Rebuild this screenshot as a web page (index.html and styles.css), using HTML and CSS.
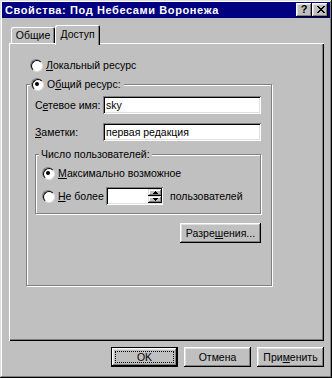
FILE: index.html
```html
<!DOCTYPE html>
<html lang="ru">
<head>
<meta charset="utf-8">
<title>Свойства</title>
<link rel="stylesheet" href="styles.css">
</head>
<body>
<div class="window">
  <div class="titlebar">
    <span class="title">Свойства: Под Небесами Воронежа</span>
    <div class="title-buttons">
      <span class="tbtn">?</span>
      <span class="tbtn close"><svg width="8" height="7" viewBox="0 0 8 7"><path d="M0 0h2v1h1v1h2v-1h1v-1h2v1h-1v1h-1v1h-1v1h1v1h1v1h1v1h-2v-1h-1v-1h-2v1h-1v1h-2v-1h1v-1h1v-1h1v-1h-1v-1h-1v-1h-1z" fill="#000"/></svg></span>
    </div>
  </div>

  <div class="tabs">
    <span class="tab">Общие</span>
    <span class="tab active">Доступ</span>
  </div>

  <div class="panel">
    <div class="radio-row">
      <span class="radio"></span>
      <span class="label"><u>Л</u>окальный ресурс</span>
    </div>

    <div class="group outer">
      <div class="legend radio-row">
        <span class="radio checked"></span>
        <span class="label">О<u>б</u>щий ресурс:</span>
      </div>

      <div class="field">
        <span class="flabel">С<u>е</u>тевое имя:</span>
        <span class="input">sky</span>
      </div>
      <div class="field second">
        <span class="flabel"><u>З</u>аметки:</span>
        <span class="input">первая редакция</span>
      </div>

      <div class="group inner">
        <div class="legend plain">Число пользователей:</div>
        <div class="radio-row">
          <span class="radio checked"></span>
          <span class="label"><u>М</u>аксимально возможное</span>
        </div>
        <div class="radio-row limit">
          <span class="radio"></span>
          <span class="label nlabel"><u>Н</u>е более</span>
          <span class="spin">
            <span class="spin-field"></span>
            <span class="spin-btns">
              <span class="sbtn"><svg width="5" height="3" viewBox="0 0 5 3"><path d="M2 0h1v1h1v1h1v1h-5v-1h1v-1h1z" fill="#000"/></svg></span>
              <span class="sbtn"><svg width="5" height="3" viewBox="0 0 5 3"><path d="M0 0h5v1h-1v1h-1v1h-1v-1h-1v-1h-1z" fill="#000"/></svg></span>
            </span>
          </span>
          <span class="label users">пользователей</span>
        </div>
      </div>

      <div class="perm-row">
        <span class="button perm">Разре<u>ш</u>ения...</span>
      </div>
    </div>
  </div>

  <div class="actions">
    <span class="button default"><span class="focus">OK</span></span>
    <span class="button">Отмена</span>
    <span class="button">При<u>м</u>енить</span>
  </div>
</div>
</body>
</html>
```

FILE: styles.css
```css
* { box-sizing: border-box; }

html, body {
  margin: 0;
  padding: 0;
  background: #c0c0c0;
}

body {
  width: 332px;
  height: 378px;
  overflow: hidden;
  font-family: "Liberation Sans", Arial, sans-serif;
  font-size: 10.5px;
  color: #000;
}

u { text-decoration: underline; text-underline-offset: 1px; }

.window {
  width: 332px;
  height: 378px;
  padding: 2px;
  background: #c0c0c0;
  box-shadow: inset -1px -1px #000, inset 1px 1px #dfdfdf,
              inset -2px -2px #808080, inset 2px 2px #fff;
  display: flex;
  flex-direction: column;
}

.titlebar {
  height: 16px;
  background: #000080;
  display: flex;
  align-items: center;
  justify-content: space-between;
  padding: 0 2px 0 3px;
}

.title {
  color: #fff;
  font-weight: bold;
  font-size: 11px;
  letter-spacing: 0.6px;
}

.title-buttons {
  display: flex;
}

.tbtn {
  width: 16px;
  height: 14px;
  background: #c0c0c0;
  box-shadow: inset -1px -1px #000, inset 1px 1px #fff,
              inset -2px -2px #808080, inset 2px 2px #dfdfdf;
  display: flex;
  align-items: center;
  justify-content: center;
  font-weight: bold;
  font-size: 11px;
  line-height: 1;
  padding-bottom: 1px;
}

.tbtn.close { padding: 0 0 1px 1px; }

.tabs {
  display: flex;
  align-items: flex-end;
  height: 18px;
  margin: 7px 0 0 7px;
  position: relative;
  z-index: 2;
}

.tab {
  height: 16px;
  width: 44px;
  margin-left: 2px;
  padding-top: 2px;
  text-align: center;
  background: #c0c0c0;
  border-radius: 2px 2px 0 0;
  box-shadow: inset 1px 1px #fff, inset -1px 0 #000, inset -2px 0 #808080;
}

.tab.active {
  height: 20px;
  width: 45px;
  margin-left: 0;
  margin-bottom: -2px;
  padding-top: 3px;
}

.panel {
  margin-left: 7px;
  width: 315px;
  height: 298px;
  background: #c0c0c0;
  box-shadow: inset 1px 1px #fff, inset -1px -1px #000, inset -2px -2px #808080;
  padding: 16px 0 0 17px;
}

.radio-row {
  display: flex;
  align-items: center;
  height: 12px;
}

.panel > .radio-row { margin-left: 4px; }

.radio {
  position: relative;
  width: 12px;
  height: 12px;
  flex: none;
  border-radius: 50%;
  border: 1px solid;
  border-color: #808080 #fff #fff #808080;
  background: #c0c0c0;
}

.radio::before {
  content: "";
  position: absolute;
  left: 0; top: 0;
  width: 10px;
  height: 10px;
  border-radius: 50%;
  border: 1px solid;
  border-color: #000 #dfdfdf #dfdfdf #000;
  background: #fff;
}

.radio.checked::after {
  content: "";
  position: absolute;
  left: 3px; top: 3px;
  width: 4px;
  height: 4px;
  border-radius: 50%;
  background: #000;
}

.label {
  margin-left: 4px;
  white-space: nowrap;
  line-height: 12px;
}

.group {
  position: relative;
  border: 1px solid #808080;
  box-shadow: inset 1px 1px #fff, 1px 1px #fff;
}

.group.outer {
  margin-top: 13px;
  width: 246px;
  height: 202px;
  padding: 11px 0 0 8px;
}

.legend {
  position: absolute;
  background: #c0c0c0;
  white-space: nowrap;
}

.outer > .legend {
  left: 3px;
  top: -8px;
  height: 13px;
  padding: 0 3px 0 1px;
}

.field {
  display: flex;
  align-items: center;
  height: 18px;
}

.field.second { margin-top: 9px; }

.flabel {
  width: 68px;
  white-space: nowrap;
}

.input {
  width: 158px;
  height: 18px;
  background: #fff;
  box-shadow: inset 1px 1px #808080, inset -1px -1px #fff,
              inset 2px 2px #000, inset -2px -2px #dfdfdf;
  padding: 3px 0 0 3px;
  white-space: nowrap;
  line-height: 12px;
}

.group.inner {
  margin-top: 13px;
  width: 226px;
  height: 60px;
  padding: 12px 0 0 6px;
}

.legend.plain {
  left: 3px;
  top: -7px;
  height: 13px;
  line-height: 13px;
  padding: 0 2px;
}

.radio-row.limit {
  margin-top: 8px;
  height: 18px;
}

.nlabel { width: 48px; }

.spin {
  display: flex;
  width: 57px;
  height: 18px;
  background: #fff;
  box-shadow: inset 1px 1px #808080, inset -1px -1px #fff,
              inset 2px 2px #000, inset -2px -2px #dfdfdf;
  padding: 2px 1px 2px 2px;
}

.spin-field { flex: 1; }

.spin-btns {
  width: 14px;
  display: flex;
  flex-direction: column;
}

.sbtn {
  flex: 1;
  background: #c0c0c0;
  display: flex;
  align-items: center;
  justify-content: center;
  box-shadow: inset -1px -1px #000, inset 1px 1px #dfdfdf,
              inset -2px -2px #808080, inset 2px 2px #fff;
}

.users { margin-left: 7px; }

.perm-row {
  margin-top: 9px;
  display: flex;
  padding-left: 145px;
}

.button {
  display: flex;
  align-items: center;
  justify-content: center;
  height: 20px;
  width: 67px;
  background: #c0c0c0;
  box-shadow: inset -1px -1px #000, inset 1px 1px #fff,
              inset -2px -2px #808080, inset 2px 2px #dfdfdf;
  white-space: nowrap;
}

.button.perm { width: 81px; }

.button.default {
  box-shadow: inset 0 0 0 1px #000, inset -2px -2px #000, inset 2px 2px #fff,
              inset -3px -3px #808080, inset 3px 3px #dfdfdf;
  padding: 4px;
}

.focus {
  flex: 1;
  align-self: stretch;
  border: 1px dotted #000;
  display: flex;
  align-items: center;
  justify-content: center;
}

.actions {
  display: flex;
  justify-content: flex-end;
  gap: 6px;
  margin: 6px 6px 0 0;
}
```
